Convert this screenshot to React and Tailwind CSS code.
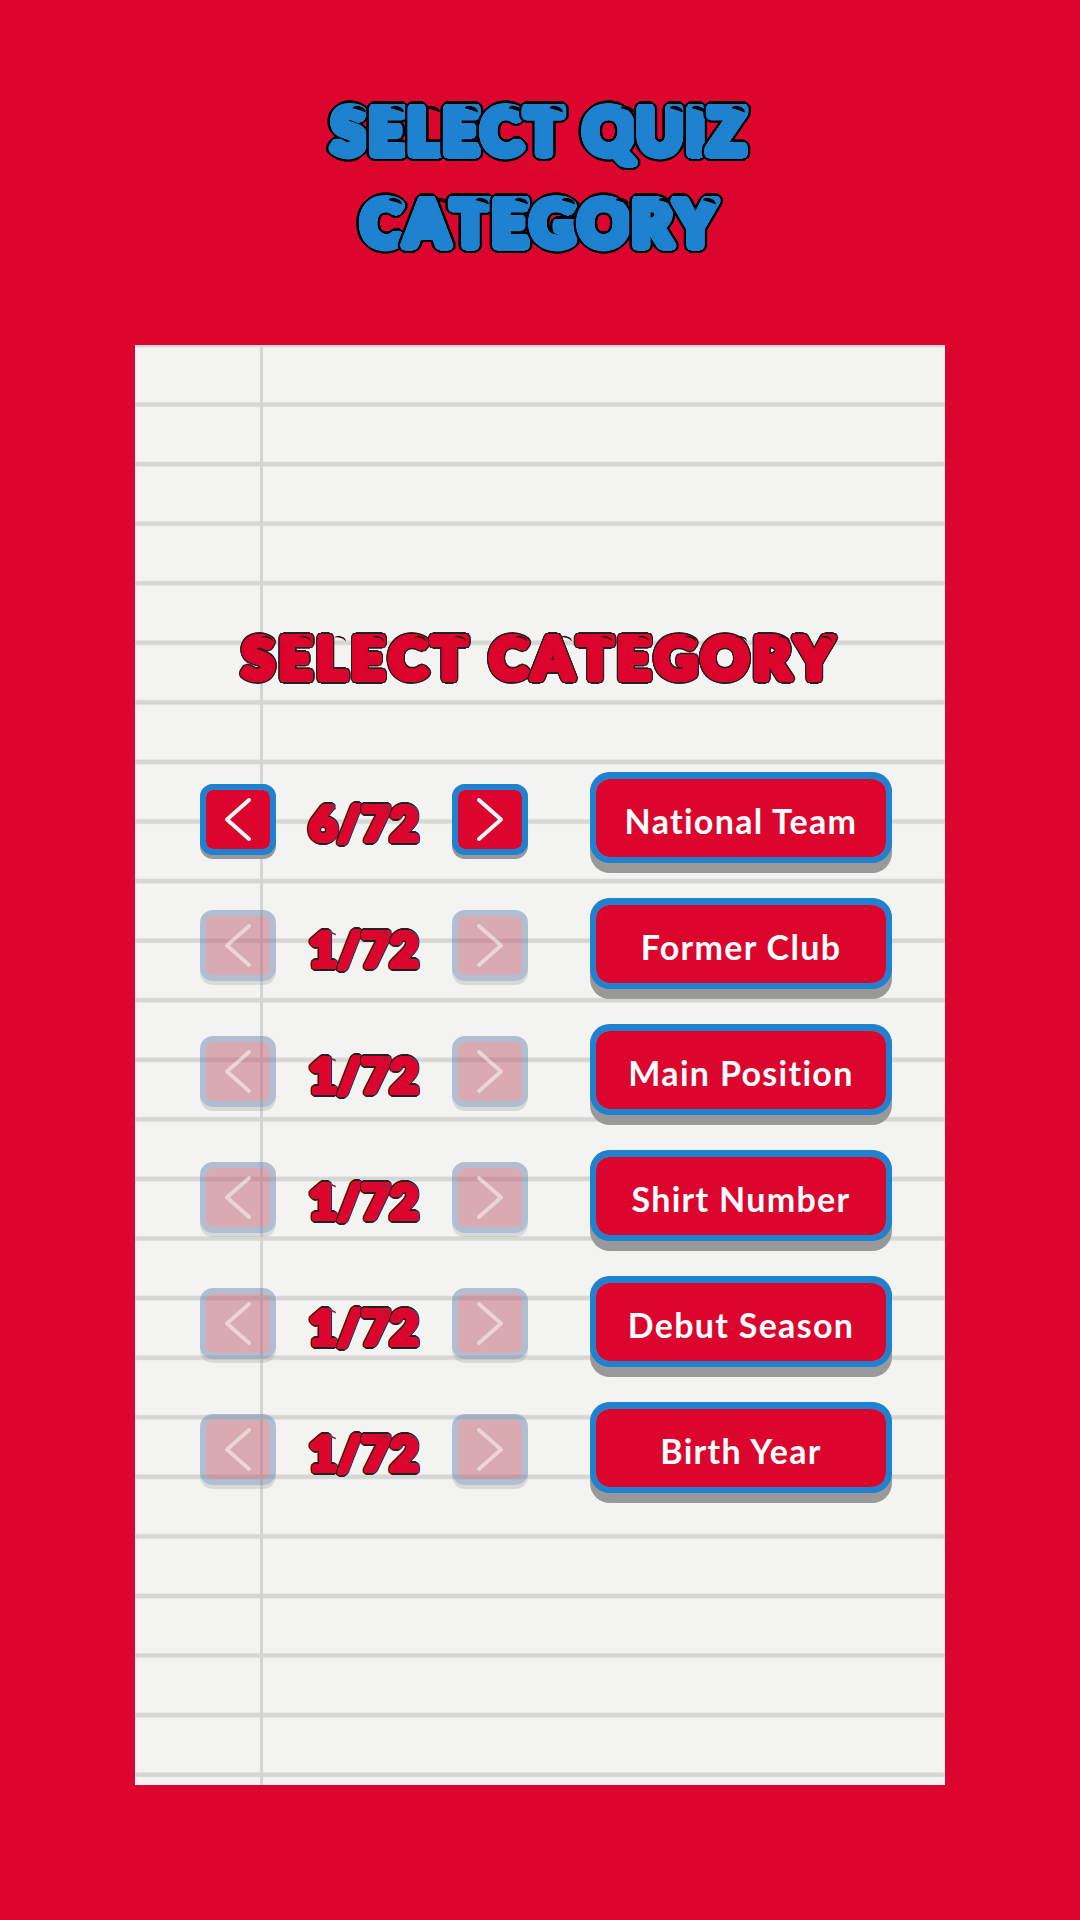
const ROWS = [
  { label: "National Team", count: "6/72", active: true },
  { label: "Former Club", count: "1/72" },
  { label: "Main Position", count: "1/72" },
  { label: "Shirt Number", count: "1/72" },
  { label: "Debut Season", count: "1/72" },
  { label: "Birth Year", count: "1/72" },
];

// round outline: rings of hard shadows, the browser's text stroke has spiky joins
const ring = (r, color) =>
  Array.from({ length: 28 }, (_, i) => {
    const a = (i / 28) * Math.PI * 2;
    return `${(Math.cos(a) * r).toFixed(2)}px ${(Math.sin(a) * r).toFixed(2)}px 0 ${color}`;
  });

const outline = (fat, edge, fill, line) =>
  [...ring(fat / 2, fill), ...ring(fat, fill), ...ring(edge, line)].join(",");

const BUBBLE = {
  title: {
    letter: "text-[62px] leading-[76px] text-[#1f82d0] mr-[3px]",
    arc: "w-[14px] h-[9px] border-t-[4px] border-black top-[14px] right-[0px] rotate-[18deg]",
    shadow: outline(4.5, 7, "#1f82d0", "#000"),
  },
  heading: {
    letter: "text-[58px] leading-[60px] text-[#dc052d] mr-[4.5px]",
    arc: "w-[12px] h-[8px] border-t-[2px] border-[#2a1418] top-[9px] right-[1px] rotate-[18deg]",
    shadow: outline(3.2, 4.6, "#dc052d", "#222"),
  },
  count: {
    letter: "text-[48px] leading-[50px] text-[#dc052d] mr-[1px]",
    arc: "w-[8px] h-[5px] border-t-[2px] border-[#7a3040] top-[8px] right-[1px] rotate-[18deg]",
    shadow: outline(2.4, 3.6, "#dc052d", "#222"),
  },
};

function Bubble({ text, kind }) {
  const style = BUBBLE[kind];
  return (
    <div className="flex justify-center whitespace-pre font-['Lato',sans-serif] font-black">
      {text.split("").map((char, index) => (
        <span
          key={index}
          className={`relative inline-block ${style.letter}`}
          style={{ textShadow: style.shadow }}
        >
          {char}
          {char !== " " && char !== "/" && (
            <span className={`absolute rounded-[50%] ${style.arc}`} />
          )}
        </span>
      ))}
    </div>
  );
}

function ArrowButton({ dir, active }) {
  return (
    <div
      className={`mb-[2px] h-[75px] w-[76px] rounded-[13px] ${active ? "bg-[#999]" : "bg-[#99999948]"}`}
    >
      <div
        className={`flex h-[71px] items-center justify-center rounded-[13px] border-[6px] bg-clip-padding ${active ? "border-[#1f82d0] bg-[#dc052d]" : "border-[#3a6fc040] bg-[#dc052d38]"}`}
      >
        <svg width="26" height="43" viewBox="0 0 26 43" fill="none">
          <polyline
            points={dir === "left" ? "24,2 2,21.5 24,41" : "2,2 24,21.5 2,41"}
            stroke={active ? "#fff" : "#ffffff80"}
            strokeWidth="3.8"
            strokeLinecap="round"
            strokeLinejoin="round"
          />
        </svg>
      </div>
    </div>
  );
}

function Row({ label, count, active }) {
  return (
    <div className="flex h-[101px] items-center justify-between">
      <div className="flex w-[328px] items-center justify-between">
        <ArrowButton dir="left" active={active} />
        <Bubble text={count} kind="count" />
        <ArrowButton dir="right" active={active} />
      </div>
      <div className="h-[101px] w-[302px] rounded-[20px] bg-[#999]">
        <div className="flex h-[91px] items-center justify-center rounded-[20px] border-[6px] border-t-[7px] border-[#1f82d0] bg-[#dc052d] bg-clip-padding pt-1 font-['Lato',sans-serif] text-[34px] font-bold tracking-[1.3px] text-white">
          {label}
        </div>
      </div>
    </div>
  );
}

export default function App() {
  return (
    <div className="flex h-[1920px] w-[1080px] flex-col items-center bg-[#dc052d]">
      <div className="mt-[92px] flex h-[253px] flex-col">
        <div className="h-[92px]">
          <Bubble text="SELECT QUIZ" kind="title" />
        </div>
        <Bubble text="CATEGORY" kind="title" />
      </div>
      <div className="flex h-[1440px] w-[810px] flex-col bg-[#f3f3f2] bg-[linear-gradient(to_right,transparent_125px,#d4d4d2_125px,#d4d4d2_128px,transparent_128px),repeating-linear-gradient(to_bottom,#d6d6d4_0,#d6d6d4_1.5px,transparent_3px,transparent_56.5px,#d6d6d4_58px,#d6d6d4_59.57px)] pl-[65px] pr-[53px] pt-[282px]">
        <div className="-ml-[65px] -mr-[53px] h-[145px]">
          <Bubble text="SELECT CATEGORY" kind="heading" />
        </div>
        <div className="flex flex-col gap-[25px]">
          {ROWS.map((row) => (
            <Row key={row.label} {...row} />
          ))}
        </div>
      </div>
    </div>
  );
}
